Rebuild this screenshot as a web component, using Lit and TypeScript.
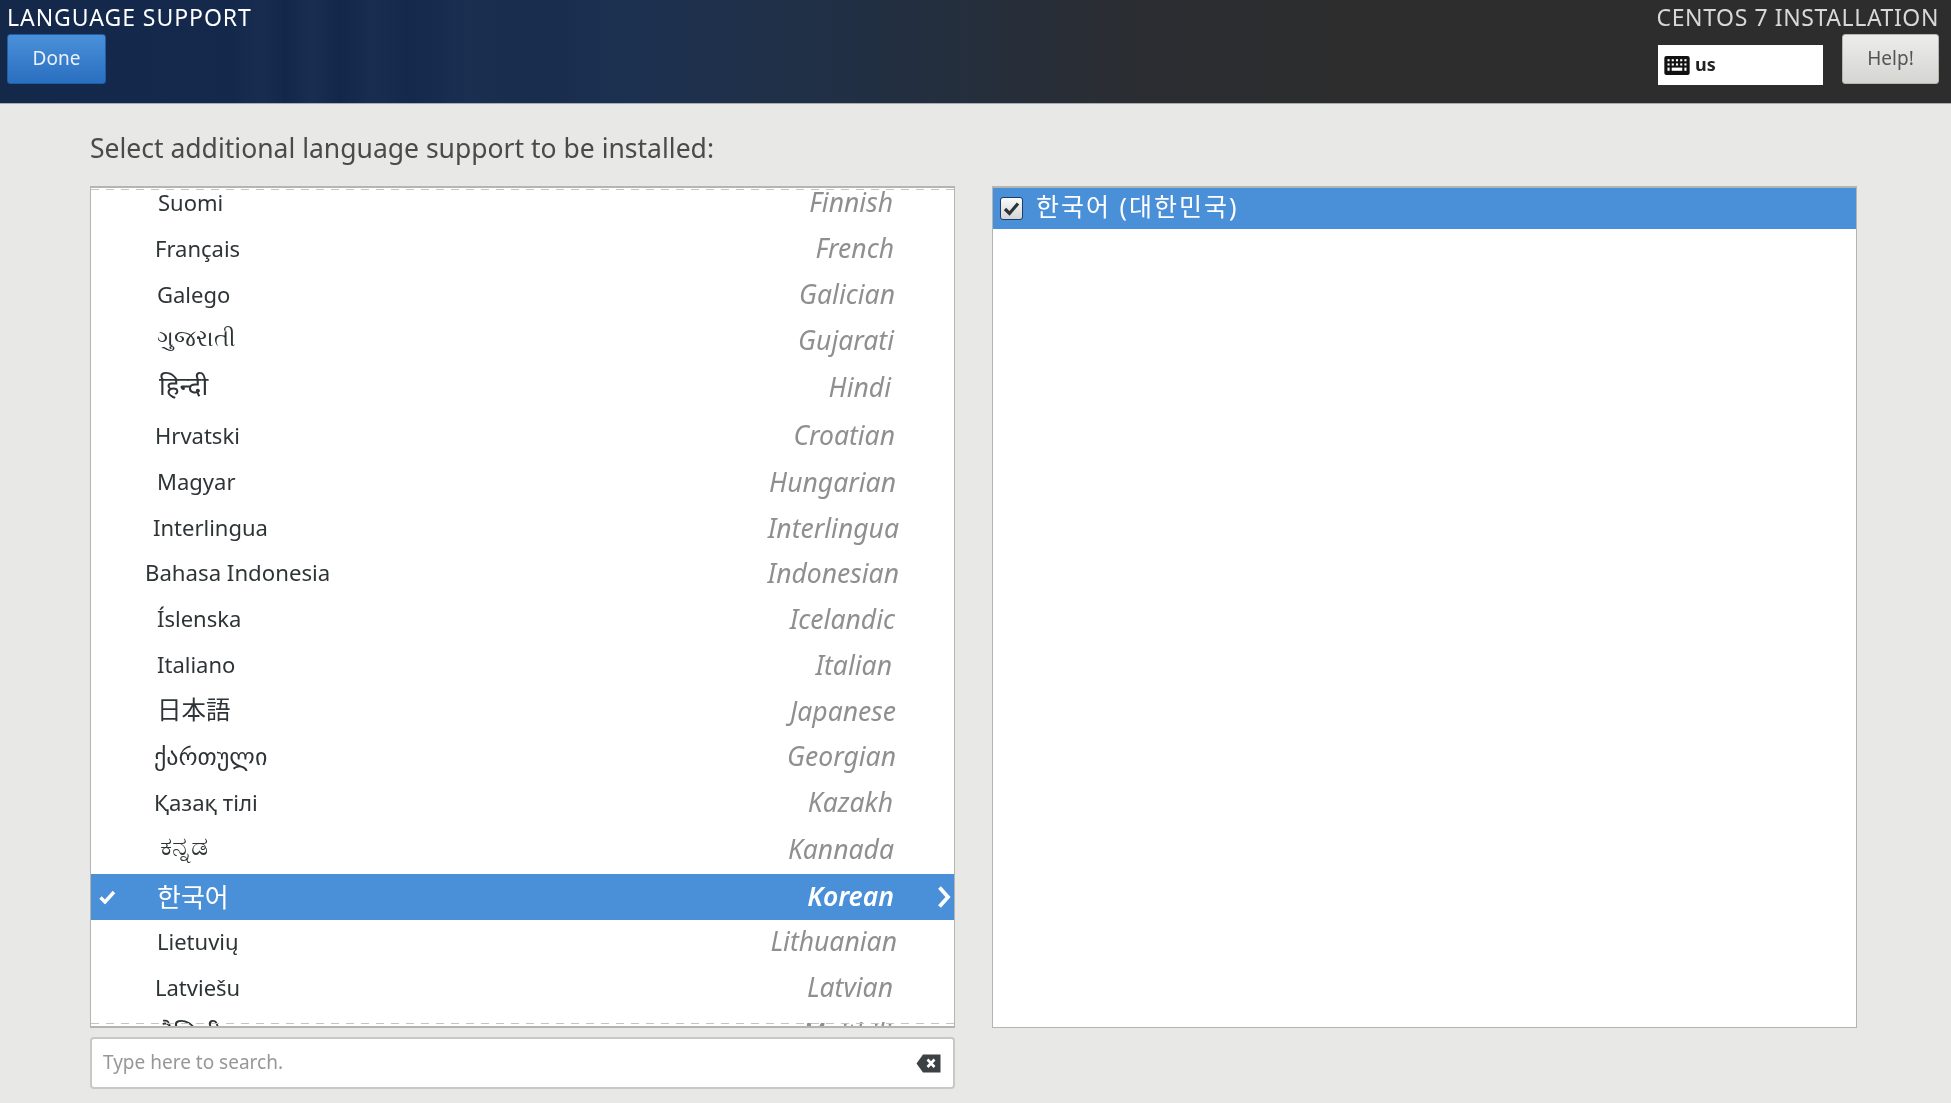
import { LitElement, html, css } from "lit";
import { customElement } from "lit/decorators.js";

// name, english, left inset, right inset, row height, name font size, name vertical shift
const ROWS: [string, string, number, number, number, number, number][] = [
  ["Suomi", "Finnish", 67, 60, 46, 22, 0],
  ["Français", "French", 64, 59, 46, 22, 0],
  ["Galego", "Galician", 66, 58, 46, 22, 0],
  ["ગુજરાતી", "Gujarati", 66, 59, 46, 22.6, 5],
  ["हिन्दी", "Hindi", 68, 62, 48, 26, 5],
  ["Hrvatski", "Croatian", 64, 58, 48, 22, 0],
  ["Magyar", "Hungarian", 66, 57, 46, 22, 2],
  ["Interlingua", "Interlingua", 62, 54, 45, 22, 2],
  ["Bahasa Indonesia", "Indonesian", 54, 54, 46, 22.2, 2],
  ["Íslenska", "Icelandic", 66, 58, 46, 22, 2],
  ["Italiano", "Italian", 66, 61, 46, 22, 2],
  ["日本語", "Japanese", 66, 57, 45, 24.5, 4],
  ["ქართული", "Georgian", 63, 57, 46, 24, 2],
  ["Қазақ тілі", "Kazakh", 63, 60, 46, 22.3, 0],
  ["ಕನ್ನಡ", "Kannada", 69, 59, 47, 27, 8],
  ["한국어", "Korean", 66, 59, 46, 26, 0],
  ["Lietuvių", "Lithuanian", 66, 56, 46, 22, 0],
  ["Latviešu", "Latvian", 64, 60, 45, 22, 0],
  ["मैथिली", "Maithili", 67, 62, 47, 26, 0],
];

const FONT = css`"Noto Sans", "DejaVu Sans", "Noto Sans CJK KR", sans-serif`;

@customElement("app-root")
export class AppRoot extends LitElement {
  static styles = css`
    :host { display: block; width: 1951px; height: 1103px; background: #e8e8e7; font-family: ${FONT}; overflow: hidden; color: #2e3436; filter: blur(0.35px); }
    * { box-sizing: border-box; }
    .header {
      height: 104px; display: flex; justify-content: space-between; padding: 5px 12px 0 7px;
      border-bottom: 1px solid #a9adb3;
      background:
        linear-gradient(90deg, rgba(0,0,0,0) 230px, rgba(255,255,255,.02) 262px, rgba(0,0,0,.045) 285px, rgba(255,255,255,.025) 312px, rgba(0,0,0,.05) 340px, rgba(255,255,255,.02) 372px, rgba(0,0,0,.035) 410px, rgba(255,255,255,.015) 470px, rgba(0,0,0,.02) 540px, rgba(0,0,0,0) 620px),
        linear-gradient(90deg, #14284a 0%, #13294d 19%, #1c3050 32%, #212f42 45%, #2a2d33 57%, #2d2d2d 70%, #2d2d2d 100%);
    }
    .hl { display: flex; flex-direction: column; }
    .title { color: #fff; font-size: 23px; letter-spacing: 0.95px; line-height: 24px; height: 29px; white-space: nowrap; }
    .done {
      width: 99px; height: 50px; border-radius: 3px; border: 1px solid #1c5ea8; color: #eaf1fa; font-size: 19px; padding-bottom: 2px;
      display: flex; align-items: center; justify-content: center;
      background: linear-gradient(#4a90d9, #2a6fc0);
    }
    .hr { display: flex; flex-direction: column; align-items: flex-end; }
    .centos { color: #d8d8d8; font-size: 23px; letter-spacing: 0.6px; line-height: 24px; height: 29px; white-space: nowrap; }
    .hrow { display: flex; gap: 19px; align-items: flex-start; }
    .kb { margin-top: 11px; width: 165px; height: 40px; background: #fff; display: flex; align-items: center; padding-left: 6px; gap: 5px; color: #222; font-size: 18px; font-weight: 700; }
    .kb span { margin-top: -2px; }
    .help {
      width: 97px; height: 50px; border-radius: 3px; border: 1px solid #b5b5b2; color: #555; font-size: 19px; padding-bottom: 2px;
      display: flex; align-items: center; justify-content: center;
      background: linear-gradient(#ededeb, #d5d5d2);
    }
    .main { padding: 0 94px 0 90px; }
    .label { height: 82px; padding-top: 5px; display: flex; align-items: center; font-size: 26.5px; color: #4a4a4a; white-space: nowrap; }
    .cols { display: flex; gap: 37px; }
    .left { width: 865px; }
    .list { position: relative; height: 842px; background: #fff; border: 1px solid #b4b4b0; border-top-width: 2px; border-bottom-width: 2px; overflow: hidden; }
    .scroll { margin-top: -7px; }
    .dash { position: absolute; left: 0; right: 0; height: 1px; background: repeating-linear-gradient(90deg, #c4c4c4 0 8px, transparent 8px 15px); }
    .dash.t { top: 1px; } .dash.b { bottom: 2px; }
    .row { position: relative; display: flex; justify-content: space-between; align-items: center; color: #2e3436; padding-bottom: 4px; }
    .row .en { font-style: italic; font-size: 26.5px; color: #8f8f8f; margin-right: 1px; }
    .row.sel { background: #4a90d9; color: #fff; padding-bottom: 2px; }
    .row.sel .en { color: #fff; font-weight: 600; }
    .tick { position: absolute; left: 8px; top: 50%; transform: translateY(-50%); display: block; }
    .chev { position: absolute; right: 3px; top: 50%; transform: translateY(-50%); display: block; }
    .search { margin-top: 9px; height: 52px; background: #fff; border: 2px solid #c8c8c5; border-radius: 4px; display: flex; align-items: center; justify-content: space-between; padding: 0 12px 0 11px; color: #979797; font-size: 19px; }
    .search span { margin-top: -2px; }
    .right { width: 865px; height: 842px; background: #fff; border: 1px solid #b4b4b0; border-top-width: 2px; }
    .chosen { height: 41px; background: #4a90d9; display: flex; align-items: center; padding: 0 0 0 7px; gap: 13px; color: #fff; font-size: 25px; letter-spacing: 2px; }
    .chosen span { margin-top: -7px; }
    .cb { width: 23px; height: 23px; border-radius: 3px; border: 1px solid #1e3d66; background: linear-gradient(#fafafa, #d4d4d4); display: flex; align-items: center; justify-content: center; }
  `;
  render() {
    return html`
      <div class="header">
        <div class="hl">
          <div class="title">LANGUAGE SUPPORT</div>
          <div class="done">Done</div>
        </div>
        <div class="hr">
          <div class="centos">CENTOS 7 INSTALLATION</div>
          <div class="hrow">
            <div class="kb">
              <svg width="26" height="19" viewBox="0 0 24 18"><rect width="24" height="18" rx="2" fill="#111"/><g fill="#fff"><rect x="3" y="3" width="2" height="2"/><rect x="7" y="3" width="2" height="2"/><rect x="11" y="3" width="2" height="2"/><rect x="15" y="3" width="2" height="2"/><rect x="19" y="3" width="2" height="2"/><rect x="3" y="7" width="2" height="2"/><rect x="7" y="7" width="2" height="2"/><rect x="11" y="7" width="2" height="2"/><rect x="15" y="7" width="2" height="2"/><rect x="19" y="7" width="2" height="2"/><rect x="3" y="11" width="2" height="3"/><rect x="7" y="11" width="10" height="3"/><rect x="19" y="11" width="2" height="3"/></g></svg>
              <span>us</span>
            </div>
            <div class="help">Help!</div>
          </div>
        </div>
      </div>
      <div class="main">
        <div class="label">Select additional language support to be installed:</div>
        <div class="cols">
          <div class="left">
            <div class="list">
              <div class="scroll">
                ${ROWS.map(([n, e, pl, pr, h, fs, up]) => html`
                  <div class="row ${n === "한국어" ? "sel" : ""}" style="height:${h}px;padding-left:${pl}px;padding-right:${pr}px;font-size:${fs}px">
                    ${n === "한국어" ? html`<svg class="tick" width="17" height="15" viewBox="0 0 17 15"><path d="M1.5 8l4.5 4.5L15 2.5" fill="none" stroke="#fff" stroke-width="3.4"/></svg>` : ""}
                    <span style="margin-top:${-up}px">${n}</span><span class="en">${e}</span>
                    ${n === "한국어" ? html`<svg class="chev" width="14" height="24" viewBox="0 0 14 24"><path d="M2.5 2.5L11 12L2.5 21.5" fill="none" stroke="#fff" stroke-width="3.8"/></svg>` : ""}
                  </div>`)}
              </div>
              <div class="dash t"></div><div class="dash b"></div>
            </div>
            <div class="search">
              <span>Type here to search.</span>
              <svg width="25" height="19" viewBox="0 0 25 19"><path d="M7 0.5H24.5V18.5H7L0.5 9.5Z" fill="#3c4143"/><path d="M11.5 5.5L18.5 13M18.5 5.5L11.5 13" stroke="#fff" stroke-width="2.6"/></svg>
            </div>
          </div>
          <div class="right">
            <div class="chosen">
              <div class="cb"><svg width="17" height="15" viewBox="0 0 17 15"><path d="M2 8l4.5 4.5L15 2.5" fill="none" stroke="#2e3436" stroke-width="3.2"/></svg></div>
              <span>한국어 (대한민국)</span>
            </div>
          </div>
        </div>
      </div>
    `;
  }
}
